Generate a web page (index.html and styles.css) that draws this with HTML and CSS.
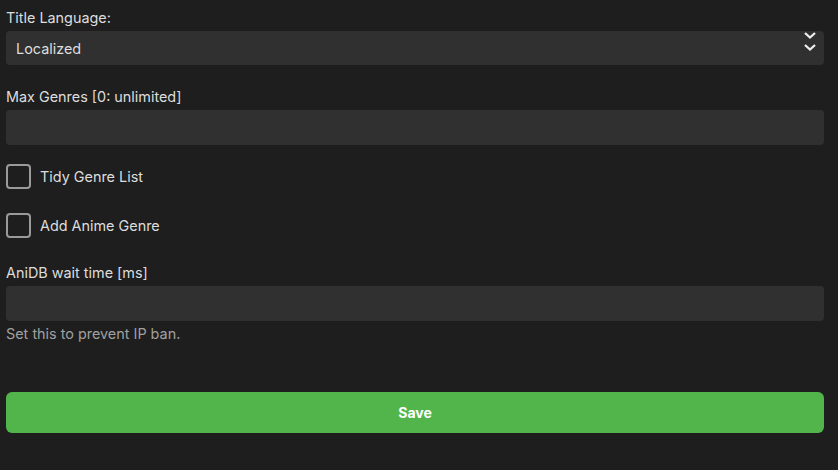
FILE: index.html
```html
<!DOCTYPE html>
<html lang="en">
<head>
    <meta charset="UTF-8">
    <meta name="viewport" content="width=device-width, initial-scale=1.0">
    <title>AniDB Settings</title>
    <link rel="stylesheet" href="styles.css">
</head>
<body>

    <form class="settings">
        <div class="field">
            <label for="title-language">Title Language:</label>
            <div class="select-wrap">
                <select id="title-language">
                    <option>Localized</option>
                    <option>Japanese</option>
                    <option>Romaji</option>
                </select>
                <svg class="select-arrow" width="14" height="22" viewBox="0 0 14 22">
                    <path d="M2 2 L7 6.5 L12 2" />
                    <path d="M2 14 L7 18.5 L12 14" />
                </svg>
            </div>
        </div>

        <div class="field">
            <label for="max-genres">Max Genres [0: unlimited]</label>
            <input type="text" id="max-genres" />
        </div>

        <label class="check">
            <input type="checkbox" id="tidy-genres" />
            <span>Tidy Genre List</span>
        </label>

        <label class="check">
            <input type="checkbox" id="anime-genre" />
            <span>Add Anime Genre</span>
        </label>

        <div class="field after-checks">
            <label for="wait-time">AniDB wait time [ms]</label>
            <input type="text" id="wait-time" />
            <div class="field-help">Set this to prevent IP ban.</div>
        </div>

        <button type="button" class="save-button">Save</button>
    </form>

</body>
</html>
```

FILE: styles.css
```css
body {
    margin: 0;
    padding: 9px 14px 0 6px;
    background-color: #1e1e1e;
    color: #dddddd;
    font-family: Inter, "Noto Sans", sans-serif;
    font-size: 14.4px;
}
.settings {
    display: flex;
    flex-direction: column;
}
.field {
    display: flex;
    flex-direction: column;
    margin-bottom: 23px;
}
.field:nth-child(2) {
    margin-bottom: 19px;
}
.field.after-checks {
    margin-top: 2px;
}
.field label {
    line-height: 18px;
    margin-bottom: 4px;
}
.select-wrap {
    position: relative;
}
select,
input[type="text"] {
    width: 100%;
    box-sizing: border-box;
    background-color: #303030;
    color: #dddddd;
    border: none;
    border-radius: 4px;
    font-family: inherit;
    font-size: 14.4px;
    outline: none;
}
select {
    height: 34px;
    padding: 0 10px;
    appearance: none;
}
input[type="text"] {
    height: 35px;
    padding: 0 10px;
}
.select-arrow {
    position: absolute;
    right: 7px;
    top: 0;
    fill: none;
    stroke: #eeeeee;
    stroke-width: 2.3;
    pointer-events: none;
}
.check {
    display: flex;
    align-items: center;
    gap: 9px;
    margin-bottom: 24px;
    cursor: pointer;
}
.check input {
    appearance: none;
    width: 25px;
    height: 25px;
    margin: 0;
    border: 2px solid #9a9a9a;
    border-radius: 4px;
    box-sizing: border-box;
}
.field-help {
    color: #a0a0a0;
    margin-top: 5px;
    line-height: 16px;
}
.save-button {
    margin-top: 27px;
    height: 41px;
    background-color: #52b54b;
    color: white;
    border: none;
    border-radius: 6px;
    font-family: inherit;
    font-size: 14px;
    font-weight: bold;
    cursor: pointer;
}
```
